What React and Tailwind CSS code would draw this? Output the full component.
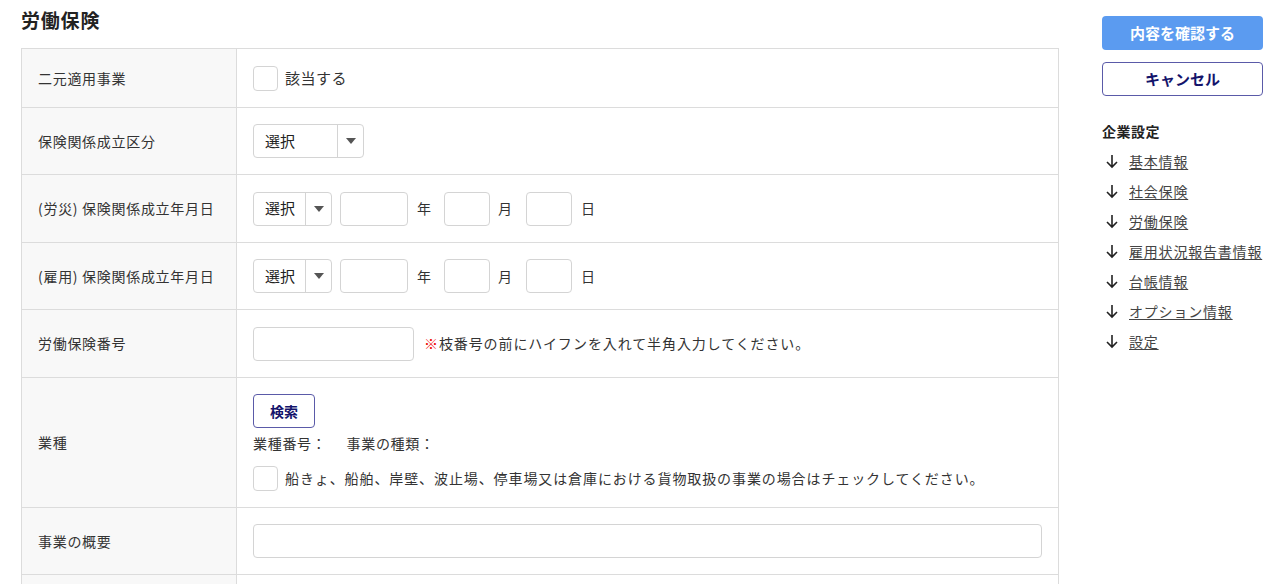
import React from 'react';

const font = { fontFamily: '"Noto Sans CJK JP", "Noto Sans", sans-serif' };

const Select = ({ width }) => (
  <div className={`flex h-[34px] ${width} items-stretch rounded border border-[#d4d4d4] bg-white`}>
    <span className="flex flex-1 items-center pl-[11px] text-[15px] text-[#222]">選択</span>
    <span className="flex w-[26px] items-center justify-center border-l border-[#d4d4d4]">
      <svg width="10" height="6" viewBox="0 0 10 6"><path d="M0 0h10L5 6z" fill="#555" /></svg>
    </span>
  </div>
);

const Box = ({ className }) => (
  <div className={`h-[34px] rounded border border-[#d4d4d4] bg-white ${className}`} />
);

const Check = () => <div className="h-[25px] w-[25px] shrink-0 rounded border border-[#d4d4d4] bg-white" />;

const Row = ({ label, h, children }) => (
  <div className={`flex border-b border-[#dcdcdc] ${h}`}>
    <div className="flex w-[215px] shrink-0 items-center border-r border-[#dcdcdc] bg-[#f8f8f8] pl-[16px] text-[14px] tracking-[0.7px] text-[#333]">
      {label}
    </div>
    <div className="flex flex-1 items-center px-[16px]">{children}</div>
  </div>
);

const DateRow = () => (
  <div className="flex items-center text-[14px] text-[#333]">
    <Select width="w-[79px]" />
    <Box className="ml-[8px] w-[68px]" />
    <span className="ml-[9px] w-[27px]">年</span>
    <Box className="w-[46px]" />
    <span className="ml-[8px] w-[28px]">月</span>
    <Box className="w-[46px]" />
    <span className="ml-[9px]">日</span>
  </div>
);

const links = ['基本情報', '社会保険', '労働保険', '雇用状況報告書情報', '台帳情報', 'オプション情報', '設定'];

export default function App() {
  return (
    <div className="flex h-[584px] w-[1280px] overflow-hidden bg-white" style={font}>
      <div className="w-[1059px] shrink-0 pl-[21px]">
        <h2 className="mt-[6px] h-[42px] text-[19px] font-bold tracking-[0.8px] text-[#222]">労働保険</h2>
        <div className="border-l border-r border-t border-[#dcdcdc]">
          <Row label="二元適用事業" h="h-[59px]">
            <Check />
            <span className="ml-[7px] text-[15px] tracking-[0.5px] text-[#333]">該当する</span>
          </Row>
          <Row label="保険関係成立区分" h="h-[67px]">
            <Select width="w-[111px]" />
          </Row>
          <Row label="(労災) 保険関係成立年月日" h="h-[68px]">
            <DateRow />
          </Row>
          <Row label="(雇用) 保険関係成立年月日" h="h-[67px]">
            <DateRow />
          </Row>
          <Row label="労働保険番号" h="h-[68px]">
            <Box className="w-[161px]" />
            <span className="ml-[10px] text-[14px] tracking-[0.9px] text-[#333]">
              <span className="text-[#e00]">※</span>枝番号の前にハイフンを入れて半角入力してください。
            </span>
          </Row>
          <Row label="業種" h="h-[130px]">
            <div className="flex flex-col">
              <button className="h-[34px] w-[62px] rounded border border-[#5a5aa8] bg-white text-[14px] font-bold text-[#14146b]">
                検索
              </button>
              <div className="mt-[5px] flex h-[20px] items-center text-[14px] tracking-[0.7px] text-[#333]">
                <span>業種番号：</span>
                <span className="ml-[20px]">事業の種類：</span>
              </div>
              <div className="mt-[13px] flex items-center">
                <Check />
                <span className="ml-[7px] text-[14px] tracking-[0.9px] text-[#333]">
                  船きょ、船舶、岸壁、波止場、停車場又は倉庫における貨物取扱の事業の場合はチェックしてください。
                </span>
              </div>
            </div>
          </Row>
          <Row label="事業の概要" h="h-[67px]">
            <Box className="w-full" />
          </Row>
          <Row label="" h="h-[67px]" />
        </div>
      </div>
      <div className="ml-[43px] w-[161px] pt-[16px]">
        <button className="h-[34px] w-full rounded bg-[#5b9bf0] text-[15px] font-bold text-white">内容を確認する</button>
        <button className="mt-[12px] h-[34px] w-full rounded border border-[#5a5aa8] bg-white text-[15px] font-bold text-[#14146b]">
          キャンセル
        </button>
        <div className="mt-[25px] text-[14px] font-bold tracking-[0.5px] text-[#222]">企業設定</div>
        <ul className="mt-[4px]">
          {links.map((l) => (
            <li key={l} className="flex h-[30px] items-center text-[14px] tracking-[0.8px] text-[#444]">
              <svg width="16" height="16" viewBox="0 0 16 16" className="ml-[2px] mr-[9px]" fill="none" stroke="#222" strokeWidth="1.6">
                <path d="M8 2v12M3 9l5 5 5-5" />
              </svg>
              <span className="underline underline-offset-2">{l}</span>
            </li>
          ))}
        </ul>
      </div>
    </div>
  );
}
